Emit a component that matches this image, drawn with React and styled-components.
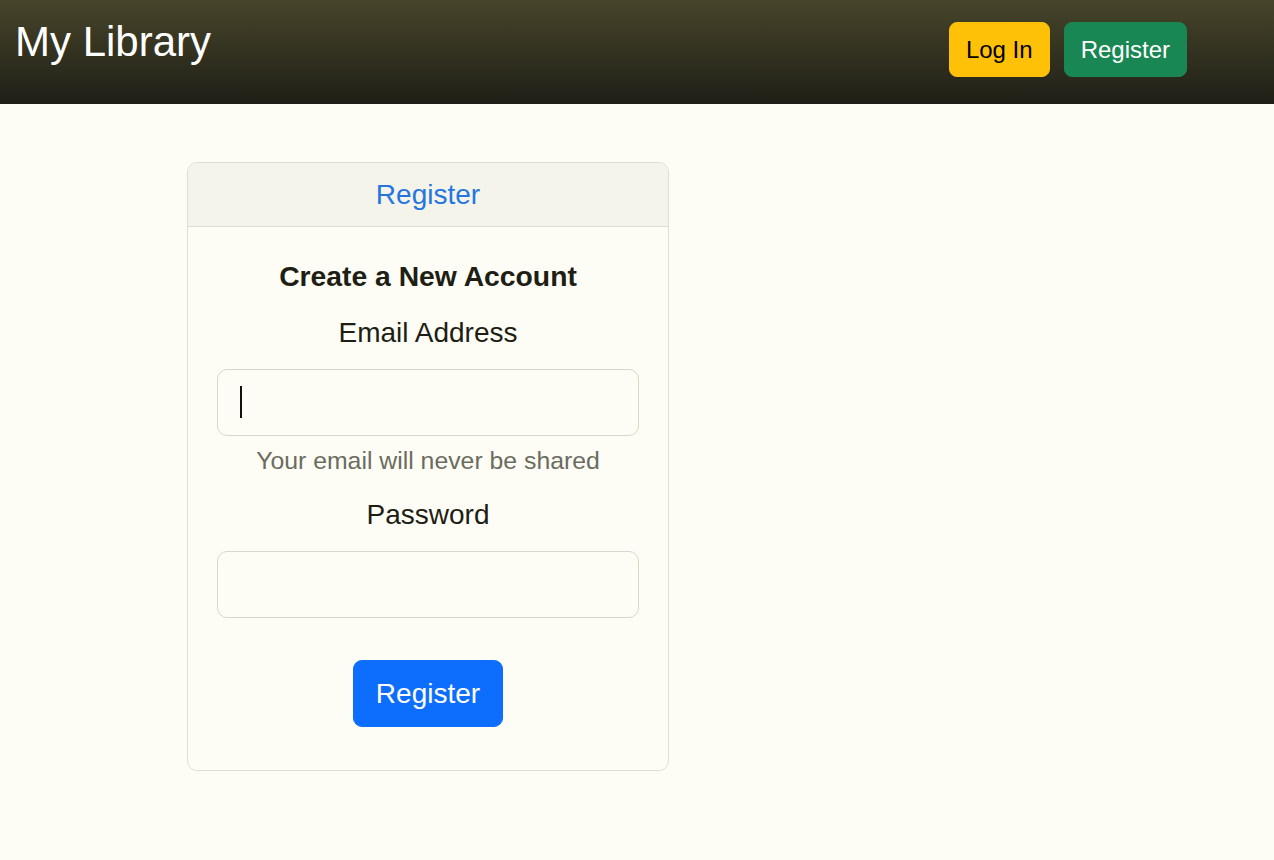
import React from 'react';
import styled, { createGlobalStyle } from 'styled-components';

const GlobalStyle = createGlobalStyle`
    html, body {
        margin: 0;
        padding: 0;
        background-color: #fdfdf6;
        font-family: "Liberation Sans", Arial, sans-serif;
        color: #222218;
    }
`;

const App = () => {
    return (
        <>
            <GlobalStyle />
            <Header>
                <Title>My Library</Title>
                <Nav>
                    <NavButton variant="warning">Log In</NavButton>
                    <NavButton variant="success">Register</NavButton>
                </Nav>
            </Header>
            <Main>
                <Card>
                    <CardHeader>
                        <HeaderLink href="#register">Register</HeaderLink>
                    </CardHeader>
                    <CardBody>
                        <Heading>Create a New Account</Heading>
                        <Label htmlFor="email">Email Address</Label>
                        <Field>
                            <Input id="email" type="email" />
                            <Caret />
                        </Field>
                        <Help>Your email will never be shared</Help>
                        <Label htmlFor="password">Password</Label>
                        <Field>
                            <Input id="password" type="password" />
                        </Field>
                        <Submit type="button">Register</Submit>
                    </CardBody>
                </Card>
            </Main>
        </>
    );
}

export default App;

const Header = styled.header`
    display: flex;
    justify-content: space-between;
    align-items: flex-start;
    height: 104px;
    box-sizing: border-box;
    padding: 0 87px 0 15px;
    background: linear-gradient(to bottom, #47452a, #1f1f17);
`;

const Title = styled.h1`
    margin: 17px 0 0;
    font-size: 42px;
    font-weight: 400;
    line-height: 1.2;
    color: #ffffff;
`;

const Nav = styled.nav`
    display: flex;
    gap: 14px;
    margin-top: 22px;
`;

const NavButton = styled.button`
    height: 55px;
    padding: 0 16px;
    border: 1px solid ${p => p.variant === 'warning' ? '#ffc107' : '#198754'};
    border-radius: 8px;
    font-family: inherit;
    font-size: 24px;
    line-height: 1.5;
    cursor: pointer;
    background-color: ${p => p.variant === 'warning' ? '#ffc107' : '#198754'};
    color: ${p => p.variant === 'warning' ? '#000000' : '#ffffff'};
`;

const Main = styled.main`
    padding: 58px 0 0 187px;
`;

const Card = styled.div`
    width: 482px;
    box-sizing: border-box;
    border: 1px solid #e0ded0;
    border-radius: 10px;
    overflow: hidden;
`;

const CardHeader = styled.div`
    height: 64px;
    box-sizing: border-box;
    display: flex;
    align-items: center;
    justify-content: center;
    background-color: #f5f4ea;
    border-bottom: 1px solid #e0ded0;
`;

const HeaderLink = styled.a`
    font-size: 28px;
    color: #2676e0;
    text-decoration: none;
`;

const CardBody = styled.div`
    display: flex;
    flex-direction: column;
    align-items: center;
    padding: 28px 29px 43px;
`;

const Heading = styled.h5`
    margin: 0 0 15px;
    font-size: 28.3px;
    font-weight: 700;
    line-height: 1.5;
    color: #1e1e14;
`;

const Label = styled.label`
    margin-bottom: 15px;
    font-size: 28px;
    line-height: 1.5;
    color: #1e1e14;
`;

const Field = styled.div`
    position: relative;
    width: 100%;
`;

const Input = styled.input`
    display: block;
    width: 100%;
    height: 67px;
    box-sizing: border-box;
    padding: 0 22px;
    border: 1px solid #d9d7c8;
    border-radius: 10px;
    background: transparent;
    font-family: inherit;
    font-size: 28px;
    color: #1e1e14;
    outline: none;
`;

const Caret = styled.span`
    position: absolute;
    left: 23px;
    top: 17px;
    width: 2px;
    height: 32px;
    background-color: #111111;
`;

const Help = styled.div`
    margin: 7px 0 15px;
    font-size: 24.8px;
    line-height: 1.45;
    color: #6b6c60;
`;

const Submit = styled.button`
    margin-top: 42px;
    height: 67px;
    padding: 0 22px;
    border: 1px solid #0d6efd;
    border-radius: 9px;
    background-color: #0d6efd;
    color: #ffffff;
    font-family: inherit;
    font-size: 28px;
    line-height: 1.5;
    cursor: pointer;
`;
